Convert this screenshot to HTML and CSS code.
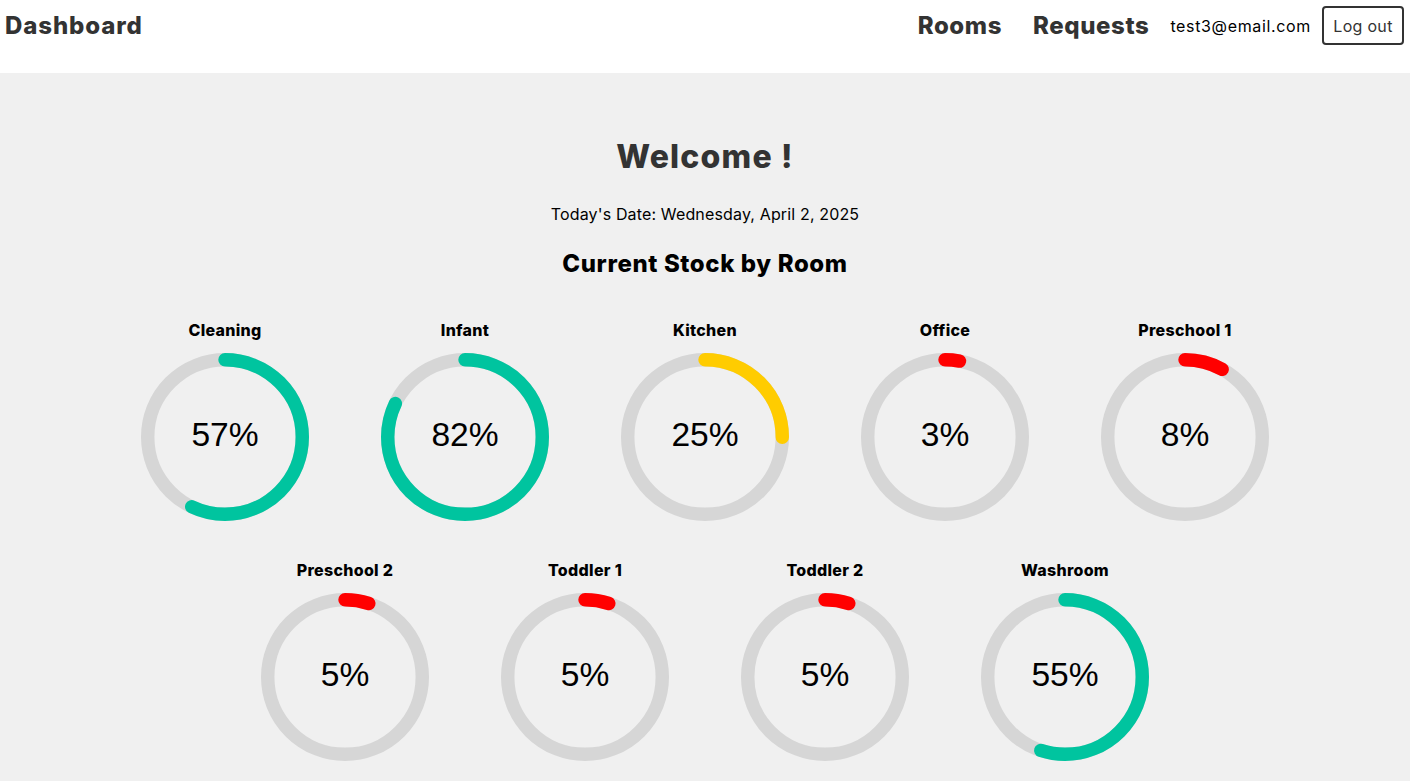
FILE: index.html
```html
<!DOCTYPE html>
<html lang="en">
<head>
<meta charset="utf-8">
<title>Dashboard</title>
<link rel="stylesheet" href="styles.css">
</head>
<body>
<nav class="navbar">
  <a class="brand" href="#">Dashboard</a>
  <div class="nav-right">
    <a class="nav-link" href="#">Rooms</a>
    <a class="nav-link" href="#">Requests</a>
    <span class="user-email">test3@email.com</span>
    <button class="logout-btn">Log out</button>
  </div>
</nav>
<main class="main">
  <h1 class="welcome">Welcome !</h1>
  <p class="date">Today's Date: Wednesday, April 2, 2025</p>
  <h2 class="section-title">Current Stock by Room</h2>
  <div class="rooms">
    <div class="room">
      <div class="room-name">Cleaning</div>
      <svg class="ring" viewBox="0 0 100 100"><path class="trail" d="M 50,50 m 0,-46 a 46,46 0 1 1 0,92 a 46,46 0 1 1 0,-92"/><path class="bar green" style="stroke-dashoffset:124.28" d="M 50,50 m 0,-46 a 46,46 0 1 1 0,92 a 46,46 0 1 1 0,-92"/><text class="pct" x="50" y="50">57%</text></svg>
    </div>
    <div class="room">
      <div class="room-name">Infant</div>
      <svg class="ring" viewBox="0 0 100 100"><path class="trail" d="M 50,50 m 0,-46 a 46,46 0 1 1 0,92 a 46,46 0 1 1 0,-92"/><path class="bar green" style="stroke-dashoffset:52.03" d="M 50,50 m 0,-46 a 46,46 0 1 1 0,92 a 46,46 0 1 1 0,-92"/><text class="pct" x="50" y="50">82%</text></svg>
    </div>
    <div class="room">
      <div class="room-name">Kitchen</div>
      <svg class="ring" viewBox="0 0 100 100"><path class="trail" d="M 50,50 m 0,-46 a 46,46 0 1 1 0,92 a 46,46 0 1 1 0,-92"/><path class="bar yellow" style="stroke-dashoffset:216.77" d="M 50,50 m 0,-46 a 46,46 0 1 1 0,92 a 46,46 0 1 1 0,-92"/><text class="pct" x="50" y="50">25%</text></svg>
    </div>
    <div class="room">
      <div class="room-name">Office</div>
      <svg class="ring" viewBox="0 0 100 100"><path class="trail" d="M 50,50 m 0,-46 a 46,46 0 1 1 0,92 a 46,46 0 1 1 0,-92"/><path class="bar red" style="stroke-dashoffset:280.36" d="M 50,50 m 0,-46 a 46,46 0 1 1 0,92 a 46,46 0 1 1 0,-92"/><text class="pct" x="50" y="50">3%</text></svg>
    </div>
    <div class="room">
      <div class="room-name">Preschool 1</div>
      <svg class="ring" viewBox="0 0 100 100"><path class="trail" d="M 50,50 m 0,-46 a 46,46 0 1 1 0,92 a 46,46 0 1 1 0,-92"/><path class="bar red" style="stroke-dashoffset:265.91" d="M 50,50 m 0,-46 a 46,46 0 1 1 0,92 a 46,46 0 1 1 0,-92"/><text class="pct" x="50" y="50">8%</text></svg>
    </div>
    <div class="room">
      <div class="room-name">Preschool 2</div>
      <svg class="ring" viewBox="0 0 100 100"><path class="trail" d="M 50,50 m 0,-46 a 46,46 0 1 1 0,92 a 46,46 0 1 1 0,-92"/><path class="bar red" style="stroke-dashoffset:274.58" d="M 50,50 m 0,-46 a 46,46 0 1 1 0,92 a 46,46 0 1 1 0,-92"/><text class="pct" x="50" y="50">5%</text></svg>
    </div>
    <div class="room">
      <div class="room-name">Toddler 1</div>
      <svg class="ring" viewBox="0 0 100 100"><path class="trail" d="M 50,50 m 0,-46 a 46,46 0 1 1 0,92 a 46,46 0 1 1 0,-92"/><path class="bar red" style="stroke-dashoffset:274.58" d="M 50,50 m 0,-46 a 46,46 0 1 1 0,92 a 46,46 0 1 1 0,-92"/><text class="pct" x="50" y="50">5%</text></svg>
    </div>
    <div class="room">
      <div class="room-name">Toddler 2</div>
      <svg class="ring" viewBox="0 0 100 100"><path class="trail" d="M 50,50 m 0,-46 a 46,46 0 1 1 0,92 a 46,46 0 1 1 0,-92"/><path class="bar red" style="stroke-dashoffset:274.58" d="M 50,50 m 0,-46 a 46,46 0 1 1 0,92 a 46,46 0 1 1 0,-92"/><text class="pct" x="50" y="50">5%</text></svg>
    </div>
    <div class="room">
      <div class="room-name">Washroom</div>
      <svg class="ring" viewBox="0 0 100 100"><path class="trail" d="M 50,50 m 0,-46 a 46,46 0 1 1 0,92 a 46,46 0 1 1 0,-92"/><path class="bar green" style="stroke-dashoffset:130.06" d="M 50,50 m 0,-46 a 46,46 0 1 1 0,92 a 46,46 0 1 1 0,-92"/><text class="pct" x="50" y="50">55%</text></svg>
    </div>
  </div>
</main>
</body>
</html>
```

FILE: styles.css
```css
* { box-sizing: border-box; }

html, body {
  margin: 0;
  padding: 0;
}

body {
  font-family: "Inter", "Noto Sans", sans-serif;
  background: #f0f0f0;
  color: #000;
}

.navbar {
  height: 73px;
  background: #ffffff;
  display: flex;
  justify-content: space-between;
  align-items: flex-start;
  padding: 6px 6px 0 5px;
}

.brand {
  font-size: 24px;
  font-weight: 800;
  color: #333;
  text-decoration: none;
  line-height: 39px;
  letter-spacing: 0.9px;
}

.nav-right {
  display: flex;
  align-items: center;
  height: 39px;
}

.nav-link {
  font-size: 24px;
  font-weight: 800;
  color: #333;
  text-decoration: none;
  margin-right: 31px;
  letter-spacing: 0.6px;
}

.nav-link:nth-child(2) {
  margin-right: 21px;
}

.user-email {
  font-size: 16px;
  color: #000;
  margin-right: 11px;
  letter-spacing: 0.65px;
}

.logout-btn {
  font-family: inherit;
  font-size: 16px;
  color: #333;
  background: #fff;
  border: 2px solid #333;
  border-radius: 4px;
  width: 82px;
  height: 39px;
  padding: 0;
  letter-spacing: 0.3px;
}

.main {
  display: flex;
  flex-direction: column;
  align-items: center;
  padding-top: 60px;
}

.welcome {
  margin: 0;
  font-size: 32px;
  line-height: 48px;
  font-weight: 800;
  color: #333;
  letter-spacing: 1.2px;
}

.date {
  margin: 21px 0 0;
  font-size: 16px;
  line-height: 24px;
  letter-spacing: 0.15px;
}

.section-title {
  margin: 20px 0 0;
  font-size: 24px;
  line-height: 36px;
  font-weight: 800;
  color: #000;
  letter-spacing: 0.6px;
}

.rooms {
  margin-top: 36px;
  width: 1200px;
  display: flex;
  flex-wrap: wrap;
  justify-content: center;
  row-gap: 37px;
}

.room {
  width: 240px;
  display: flex;
  flex-direction: column;
  align-items: center;
}

.room-name {
  font-size: 16px;
  line-height: 24px;
  font-weight: 800;
  margin-bottom: 11px;
  letter-spacing: 0.3px;
}

.ring {
  width: 168px;
  height: 168px;
  display: block;
}

.trail {
  fill: none;
  stroke: #d6d6d6;
  stroke-width: 8;
}

.bar {
  fill: none;
  stroke-width: 8;
  stroke-linecap: round;
  stroke-dasharray: 289.03 289.03;
}

.green { stroke: #00c49f; }
.yellow { stroke: #ffcc00; }
.red { stroke: #ff0000; }

.pct {
  font-family: "Liberation Sans", Arial, sans-serif;
  font-size: 20px;
  fill: #000;
  text-anchor: middle;
  dominant-baseline: middle;
}
```
